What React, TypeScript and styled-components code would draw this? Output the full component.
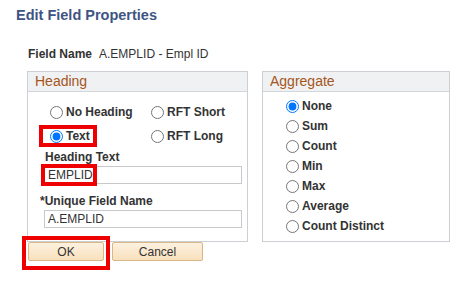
import React from 'react';
import styled, { createGlobalStyle } from 'styled-components';

const GlobalStyle = createGlobalStyle`
  html, body { margin: 0; padding: 0; background: #fff; }
  body { font-family: "Liberation Sans", Arial, sans-serif; color: #333; }
`;

const Page = styled.div`
  width: 464px;
  height: 282px;
  padding: 6px 0 0 16px;
  box-sizing: border-box;
  overflow: hidden;
`;

const Title = styled.h1`
  margin: 0;
  font-size: 14.5px;
  line-height: 18px;
  font-weight: bold;
  color: #3e5583;
`;

const FieldRow = styled.div`
  margin: 23px 0 0 12px;
  font-size: 12px;
  line-height: 14px;
  display: flex;
  gap: 7px;
`;

const Bold = styled.span`
  font-weight: bold;
`;

const PanelRow = styled.div`
  display: flex;
  align-items: flex-start;
  gap: 14px;
  margin: 10px 0 0 11px;
`;

const Panel = styled.div<{ $width: number; $height: number }>`
  width: ${({ $width }) => $width}px;
  height: ${({ $height }) => $height}px;
  box-sizing: border-box;
  border: 1px solid #ccd0d4;
`;

const PanelHeader = styled.div`
  height: 20px;
  box-sizing: border-box;
  background: #eff1f3;
  border-bottom: 1px solid #d2d6da;
  padding-left: 7px;
  font-size: 14px;
  line-height: 19px;
  color: #a5561c;
`;

const HeadingBody = styled.div`
  padding: 13px 4px 0 16px;
`;

const RadioGrid = styled.div`
  display: grid;
  grid-template-columns: 101px auto;
  row-gap: 10px;
  padding-left: 6px;
`;

const Option = styled.label`
  display: inline-flex;
  align-items: center;
  gap: 3px;
  height: 14px;
  font-size: 12px;
  font-weight: bold;
  color: #333;
  white-space: nowrap;
`;

const Radio = styled.input.attrs({ type: 'radio' })`
  width: 13px;
  height: 13px;
  margin: 0;
  accent-color: #0075ff;
`;

const FieldLabel = styled.div<{ $shift: number; $top: number }>`
  margin: ${({ $top }) => $top}px 0 0 ${({ $shift }) => $shift}px;
  font-size: 12px;
  font-weight: bold;
  line-height: 14px;
  color: #333;
`;

const TextBox = styled.input`
  display: block;
  width: 198px;
  height: 18px;
  box-sizing: border-box;
  margin-top: 2px;
  padding: 0 3px;
  border: 1px solid #c6cacd;
  font-family: "Liberation Sans", Arial, sans-serif;
  font-size: 12px;
  color: #333;
  background: #fff;
  outline: none;
`;

const AggregateList = styled.div`
  display: flex;
  flex-direction: column;
  gap: 6px;
  padding: 7px 0 0 23px;
`;

const ButtonRow = styled.div`
  display: flex;
  gap: 8px;
  margin: 0 0 0 12px;
`;

const Button = styled.button<{ $width: number }>`
  width: ${({ $width }) => $width}px;
  height: 19px;
  padding: 0;
  border: 1px solid #d8b685;
  border-radius: 2px;
  background: linear-gradient(#fdf1df, #f8e0bd);
  font-family: "Liberation Sans", Arial, sans-serif;
  font-size: 12px;
  color: #333;
`;

const Marked = styled.span`
  position: relative;
  display: inline-flex;
`;

const MarkBox = styled.span<{ $top: number; $left: number; $w: number; $h: number }>`
  position: absolute;
  top: ${({ $top }) => $top}px;
  left: ${({ $left }) => $left}px;
  width: ${({ $w }) => $w}px;
  height: ${({ $h }) => $h}px;
  box-sizing: border-box;
  border: 4px solid #ee0000;
  pointer-events: none;
`;

const aggregates = ['None', 'Sum', 'Count', 'Min', 'Max', 'Average', 'Count Distinct'];

const App: React.FC = () => {
  return (
    <Page>
      <GlobalStyle />
      <Title>Edit Field Properties</Title>
      <FieldRow>
        <Bold>Field Name</Bold>
        <span>A.EMPLID - Empl ID</span>
      </FieldRow>
      <PanelRow>
        <Panel $width={221} $height={171}>
          <PanelHeader>Heading</PanelHeader>
          <HeadingBody>
            <RadioGrid>
              <Option><Radio name="heading" readOnly />No Heading</Option>
              <Option><Radio name="heading" readOnly />RFT Short</Option>
              <Marked>
                <Option><Radio name="heading" defaultChecked />Text</Option>
                <MarkBox $top={-4} $left={-11} $w={58} $h={22} />
              </Marked>
              <Option><Radio name="heading" readOnly />RFT Long</Option>
            </RadioGrid>
            <FieldLabel $shift={1} $top={7}>Heading Text</FieldLabel>
            <Marked>
              <TextBox defaultValue="EMPLID" />
              <MarkBox $top={0} $left={-3} $w={56} $h={22} />
            </Marked>
            <FieldLabel $shift={-4} $top={10}>*Unique Field Name</FieldLabel>
            <TextBox defaultValue="A.EMPLID" />
          </HeadingBody>
        </Panel>
        <Panel $width={188} $height={171}>
          <PanelHeader>Aggregate</PanelHeader>
          <AggregateList>
            {aggregates.map((a, i) => (
              <Option key={a}>
                <Radio name="aggregate" defaultChecked={i === 0} />
                {a}
              </Option>
            ))}
          </AggregateList>
        </Panel>
      </PanelRow>
      <ButtonRow>
        <Marked>
          <Button $width={76}>OK</Button>
          <MarkBox $top={-6} $left={-6} $w={88} $h={34} />
        </Marked>
        <Button $width={91}>Cancel</Button>
      </ButtonRow>
    </Page>
  );
};

export default App;
